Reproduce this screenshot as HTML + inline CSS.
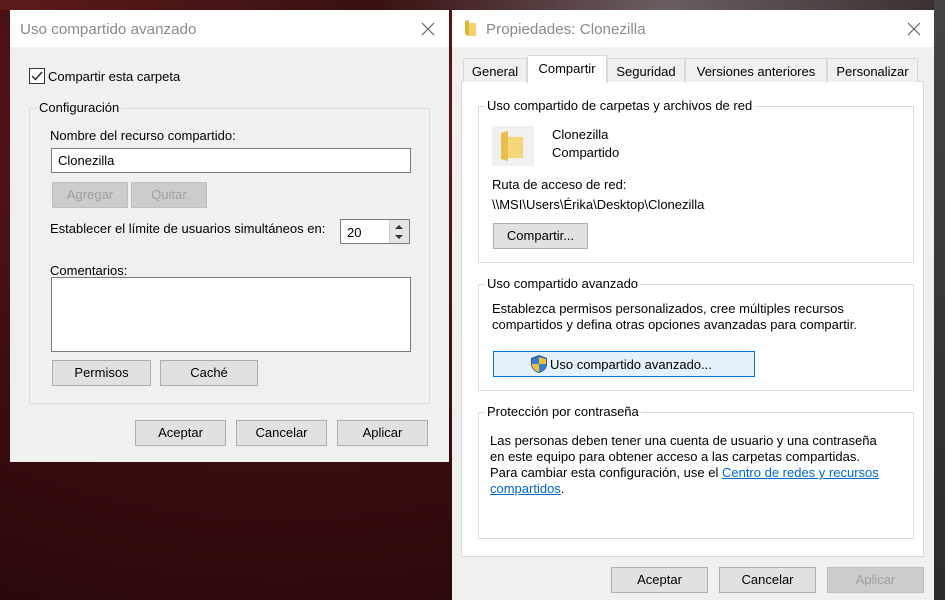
<!DOCTYPE html>
<html><head><meta charset="utf-8"><style>
*{box-sizing:border-box;margin:0;padding:0}
body{width:945px;height:600px;overflow:hidden;position:relative;font-family:"Liberation Sans",sans-serif;font-size:13px;color:#000;
background:radial-gradient(ellipse at 30% 20%,#6a1a1e 0%,#3a0c0f 50%,#1c0506 100%);}
.a{position:absolute}
.dlg{background:#f0f0f0}
.tb{background:#fff;height:37px}
.title{font-size:15.2px;color:#8a8a8a}
.btn{position:absolute;background:#e1e1e1;border:1px solid #adadad;text-align:center;line-height:24px;font-size:13px}
.dis{color:#a0a0a0;background:#ccc;border-color:#bfbfbf}
.gb{position:absolute;border:1px solid #dcdcdc}
.gl{position:absolute;background:#f0f0f0;padding:0 2px;font-size:13px}
.in{position:absolute;background:#fff;border:1px solid #7a7a7a}
.t{position:absolute;font-size:13px;white-space:nowrap}
.tab{position:absolute;top:58px;height:24px;background:#f0f0f0;border:1px solid #d9d9d9;border-bottom:none;font-size:13px;text-align:center;line-height:26px}
</style></head><body>
<div class="a" style="left:0;top:0;width:945px;height:10px;background:linear-gradient(90deg,#5a1a1c,#3a1010 40%,#6a5e60 70%,#3a3030)"></div>
<div class="a" style="left:934px;top:0;width:11px;height:600px;background:linear-gradient(#444,#2a2a2a)"></div>

<!-- Left dialog -->
<div class="a dlg" style="left:10px;top:10px;width:439px;height:452px;">
 <div class="tb"></div>
 <div class="a title" style="left:10px;top:11px">Uso compartido avanzado</div>
 <svg class="a" style="left:411px;top:12px" width="14" height="14"><path d="M1 1L13 13M13 1L1 13" stroke="#555" stroke-width="1"/></svg>
</div>
<div class="a" style="left:29px;top:68px;width:16px;height:16px;border:1px solid #333;background:#fff"></div>
<svg class="a" style="left:31px;top:70px" width="12" height="12"><path d="M1 6L4.5 9.5L11 2" stroke="#222" stroke-width="1.4" fill="none"/></svg>
<div class="t" style="left:48px;top:69px">Compartir esta carpeta</div>
<div class="gb" style="left:29px;top:108px;width:401px;height:296px"></div>
<div class="gl" style="left:37px;top:100px">Configuración</div>
<div class="t" style="left:50px;top:128px">Nombre del recurso compartido:</div>
<div class="in" style="left:51px;top:148px;width:360px;height:25px"></div>
<div class="t" style="left:58px;top:153px">Clonezilla</div>
<div class="btn dis" style="left:52px;top:182px;width:76px;height:26px">Agregar</div>
<div class="btn dis" style="left:131px;top:182px;width:76px;height:26px">Quitar</div>
<div class="t" style="left:50px;top:221px">Establecer el límite de usuarios simultáneos en:</div>
<div class="in" style="left:340px;top:219px;width:70px;height:25px"></div>
<div class="t" style="left:347px;top:225px;font-size:13px">20</div>
<div class="a" style="left:389px;top:220px;width:20px;height:23px;background:#e5e5e5;border-left:1px solid #ccc"></div>
<svg class="a" style="left:393px;top:222px" width="12" height="20"><path d="M2 7L6 3L10 7Z M2 13L6 17L10 13Z" fill="#333"/></svg>
<div class="t" style="left:50px;top:263px">Comentarios:</div>
<div class="in" style="left:51px;top:277px;width:360px;height:75px"></div>
<div class="btn" style="left:52px;top:360px;width:99px;height:26px">Permisos</div>
<div class="btn" style="left:160px;top:360px;width:98px;height:26px">Caché</div>
<div class="btn" style="left:135px;top:420px;width:91px;height:26px">Aceptar</div>
<div class="btn" style="left:236px;top:420px;width:91px;height:26px">Cancelar</div>
<div class="btn" style="left:337px;top:420px;width:91px;height:26px">Aplicar</div>

<!-- Right dialog -->
<div class="a dlg" style="left:452px;top:10px;width:482px;height:590px;">
 <div class="tb"></div>
 <div class="a title" style="left:34px;top:11px">Propiedades: Clonezilla</div>
 <svg class="a" style="left:12px;top:9px" width="14" height="18"><path d="M1 2L5 1L5 4L12 4L12 17L3 17L1 15Z" fill="#f5d16b"/><path d="M1 2L5 1L5 16L1 15Z" fill="#e2b33c"/></svg>
 <svg class="a" style="left:455px;top:12px" width="14" height="14"><path d="M1 1L13 13M13 1L1 13" stroke="#555" stroke-width="1"/></svg>
</div>
<div class="a" style="left:461px;top:81px;width:463px;height:476px;background:#fff;border:1px solid #d9d9d9"></div>
<div class="tab" style="left:463px;width:64px">General</div>
<div class="tab" style="left:607px;width:78px">Seguridad</div>
<div class="tab" style="left:685px;width:142px">Versiones anteriores</div>
<div class="tab" style="left:827px;width:91px">Personalizar</div>
<div class="tab" style="left:527px;top:55px;width:80px;height:28px;background:#fff;line-height:26px">Compartir</div>

<div class="gb" style="left:478px;top:106px;width:436px;height:157px"></div>
<div class="gl" style="left:485px;top:98px;background:#fff">Uso compartido de carpetas y archivos de red</div>
<div class="a" style="left:492px;top:126px;width:42px;height:40px;background:#f0f0f0"></div>
<svg class="a" style="left:498px;top:129px" width="28" height="36"><path d="M3 4L10 2L10 8L25 8L25 29L6 29L3 26Z" fill="#f5d67a"/><path d="M3 4L10 2L10 32L3 30Z" fill="#e8bd4a"/></svg>
<div class="t" style="left:552px;top:127px">Clonezilla</div>
<div class="t" style="left:552px;top:145px">Compartido</div>
<div class="t" style="left:492px;top:177px">Ruta de acceso de red:</div>
<div class="t" style="left:492px;top:197px">\\MSI\Users\Érika\Desktop\Clonezilla</div>
<div class="btn" style="left:493px;top:223px;width:95px;height:26px">Compartir...</div>

<div class="gb" style="left:478px;top:284px;width:436px;height:107px"></div>
<div class="gl" style="left:485px;top:276px;background:#fff">Uso compartido avanzado</div>
<div class="t" style="left:492px;top:301px">Establezca permisos personalizados, cree múltiples recursos</div>
<div class="t" style="left:492px;top:317px">compartidos y defina otras opciones avanzadas para compartir.</div>
<div class="btn" style="left:493px;top:351px;width:262px;height:26px;background:#e5f1fb;border:1px solid #0078d7"></div>
<svg class="a" style="left:529px;top:354px" width="20" height="20"><path d="M10 1L18 4L18 10C18 15 14 18 10 19C6 18 2 15 2 10L2 4Z" fill="#2b5fa8"/><path d="M10 3L10 10L17 10L17 5Z M10 10L3 10C3 14 6 17 10 18Z" fill="#f4c430"/><path d="M10 3L3 5L3 10L10 10Z M10 10L10 18C14 17 17 14 17 10Z" fill="#3a7bd5"/></svg>
<div class="t" style="left:550px;top:357px">Uso compartido avanzado...</div>

<div class="gb" style="left:478px;top:412px;width:436px;height:127px"></div>
<div class="gl" style="left:485px;top:404px;background:#fff">Protección por contraseña</div>
<div class="t" style="left:490px;top:433px">Las personas deben tener una cuenta de usuario y una contraseña</div>
<div class="t" style="left:490px;top:449px">en este equipo para obtener acceso a las carpetas compartidas.</div>
<div class="t" style="left:490px;top:465px">Para cambiar esta configuración, use el <span style="color:#0066cc;text-decoration:underline">Centro de redes y recursos</span></div>
<div class="t" style="left:490px;top:481px"><span style="color:#0066cc;text-decoration:underline">compartidos</span>.</div>

<div class="btn" style="left:611px;top:567px;width:97px;height:26px">Aceptar</div>
<div class="btn" style="left:719px;top:567px;width:97px;height:26px">Cancelar</div>
<div class="btn dis" style="left:827px;top:567px;width:97px;height:26px">Aplicar</div>
</body></html>
